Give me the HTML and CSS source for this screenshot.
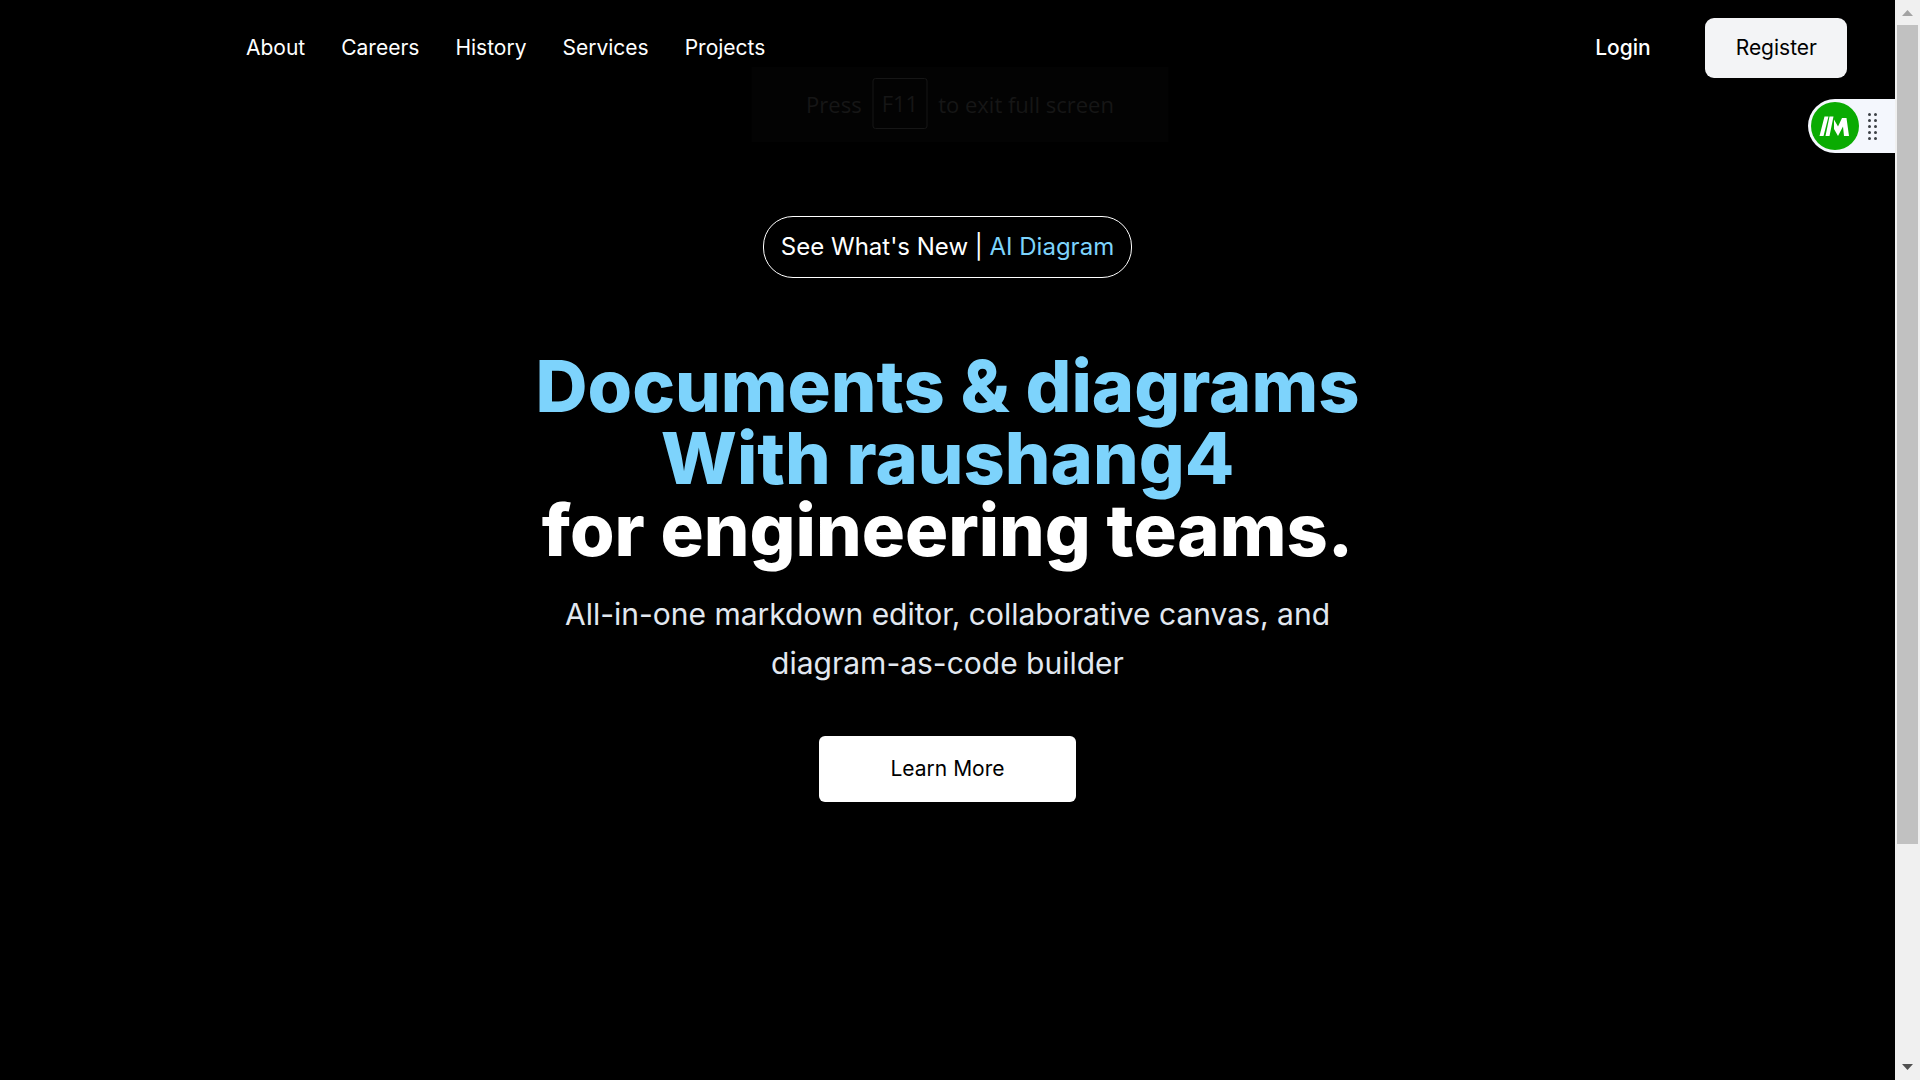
FILE: index.html
```html
<!DOCTYPE html>
<html lang="en">
<head>
<meta charset="utf-8">
<title>raushang4</title>
<link rel="stylesheet" href="styles.css">
</head>
<body>
<div class="page">
  <header class="header">
    <nav class="nav" aria-label="Main">
      <a href="#about">About</a>
      <a href="#careers">Careers</a>
      <a href="#history">History</a>
      <a href="#services">Services</a>
      <a href="#projects">Projects</a>
    </nav>
    <div class="account">
      <button class="login" type="button">Login</button>
      <button class="register" type="button">Register</button>
    </div>
  </header>
  <main class="hero">
    <a class="news" href="#diagram">See What's New | <span class="accent">AI Diagram</span></a>
    <h1 class="title"><span class="accent">Documents &amp; diagrams<br>With raushang4</span><br>for engineering teams.</h1>
    <p class="lead">All-in-one markdown editor, collaborative canvas, and diagram-as-code builder</p>
    <button class="more" type="button">Learn More</button>
  </main>
  <aside class="dock">
    <svg class="dock-logo" viewBox="0 0 48 48" aria-hidden="true">
      <circle cx="24" cy="24" r="24" fill="#0aab02"/>
      <path fill="#fff" d="M13.500 14.500h4L12.500 34h-4zM18.500 14.500h4L18.500 34h-4zM23 17.500l4 7 4-8.500h4.500L38 34h-5l-1-9.500L27 34l-4-7z"/>
    </svg>
    <svg class="dock-grip" viewBox="0 0 9 27" aria-hidden="true">
      <path d="M1.500 1.500v24.500M7.500 1.500v24.500" stroke="#3c4146" stroke-width="3" stroke-linecap="round" stroke-dasharray="0 6"/>
    </svg>
  </aside>
</div>
<div class="scrollbar" aria-hidden="true">
  <svg class="arrow" viewBox="0 0 25 25"><path d="M12.500 10l5.500 6H7z" fill="#a3a3a3"/></svg>
  <div class="thumb"></div>
  <div class="track"></div>
  <svg class="arrow" viewBox="0 0 25 25"><path d="M12.500 15l5.500-6H7z" fill="#505050"/></svg>
</div>
<div class="notice">Press <kbd class="key">F11</kbd> to exit full screen</div>
</body>
</html>
```
FILE: styles.css
```css
* { box-sizing: border-box; }

body {
  margin: 0;
  display: flex;
  min-height: 100vh;
  background: #000;
  color: #fff;
  font-family: Inter, "Liberation Sans", sans-serif;
  font-size: 21px;
}

a { color: inherit; text-decoration: none; }

button {
  border: 0;
  padding: 0;
  background: none;
  color: inherit;
  font: inherit;
}

.page { position: relative; flex: 1; }

.header {
  display: flex;
  align-items: center;
  justify-content: space-between;
  height: 96px;
  padding: 0 48px 0 246px;
}

.nav { display: flex; gap: 36px; padding-bottom: 2px; }

.account { display: flex; align-items: center; gap: 54px; }

.login { padding-bottom: 2px; font-weight: 500; }

.register {
  height: 60px;
  padding: 0 30px 2px 31px;
  border-radius: 9px;
  background: #f3f4f6;
  color: #000;
}

.hero {
  display: flex;
  flex-direction: column;
  align-items: center;
  padding: 120px 24px 48px;
  text-align: center;
}

.news {
  padding: 12px 17px;
  border: 1px solid #fff;
  border-radius: 30px;
  font-size: 24px;
  line-height: 36px;
}

.accent { color: #7dd3fc; }

.title {
  margin: 72px 0 24px;
  font-size: 72px;
  font-weight: 800;
  line-height: 72px;
}

.lead {
  max-width: 800px;
  margin: 0 0 48px;
  color: #e2e8f0;
  font-size: 30px;
  line-height: 49px;
}

.more {
  height: 66px;
  padding: 0 71px 2px;
  border-radius: 6px;
  background: #fff;
  color: #000;
}

.dock {
  position: absolute;
  top: 99px;
  right: 0;
  display: flex;
  align-items: center;
  gap: 9px;
  width: 87px;
  height: 54px;
  padding-left: 3px;
  border-radius: 27px 0 0 27px;
  background: #f4f7fd;
}

.dock-logo { width: 48px; height: 48px; }
.dock-grip { width: 9px; height: 27px; }

.scrollbar {
  display: flex;
  flex-direction: column;
  width: 25px;
  background: #f0f0f0;
}

.arrow { flex: none; width: 25px; height: 25px; }
.thumb { flex: 159; margin: 0 2px; background: #c1c1c1; }
.track { flex: 41; }

.notice {
  position: absolute;
  top: 67px;
  left: 50%;
  transform: translateX(-50%);
  display: flex;
  align-items: center;
  justify-content: center;
  gap: 11px;
  width: 417px;
  height: 75px;
  padding-bottom: 2px;
  background: #030303;
  color: #161616;
  font-family: "Open Sans", "Noto Sans", sans-serif;
  font-size: 22px;
  white-space: nowrap;
}

.key {
  padding: 0 8px;
  border: 1px solid #161616;
  border-radius: 3px;
  font: inherit;
  line-height: 49px;
}
```
